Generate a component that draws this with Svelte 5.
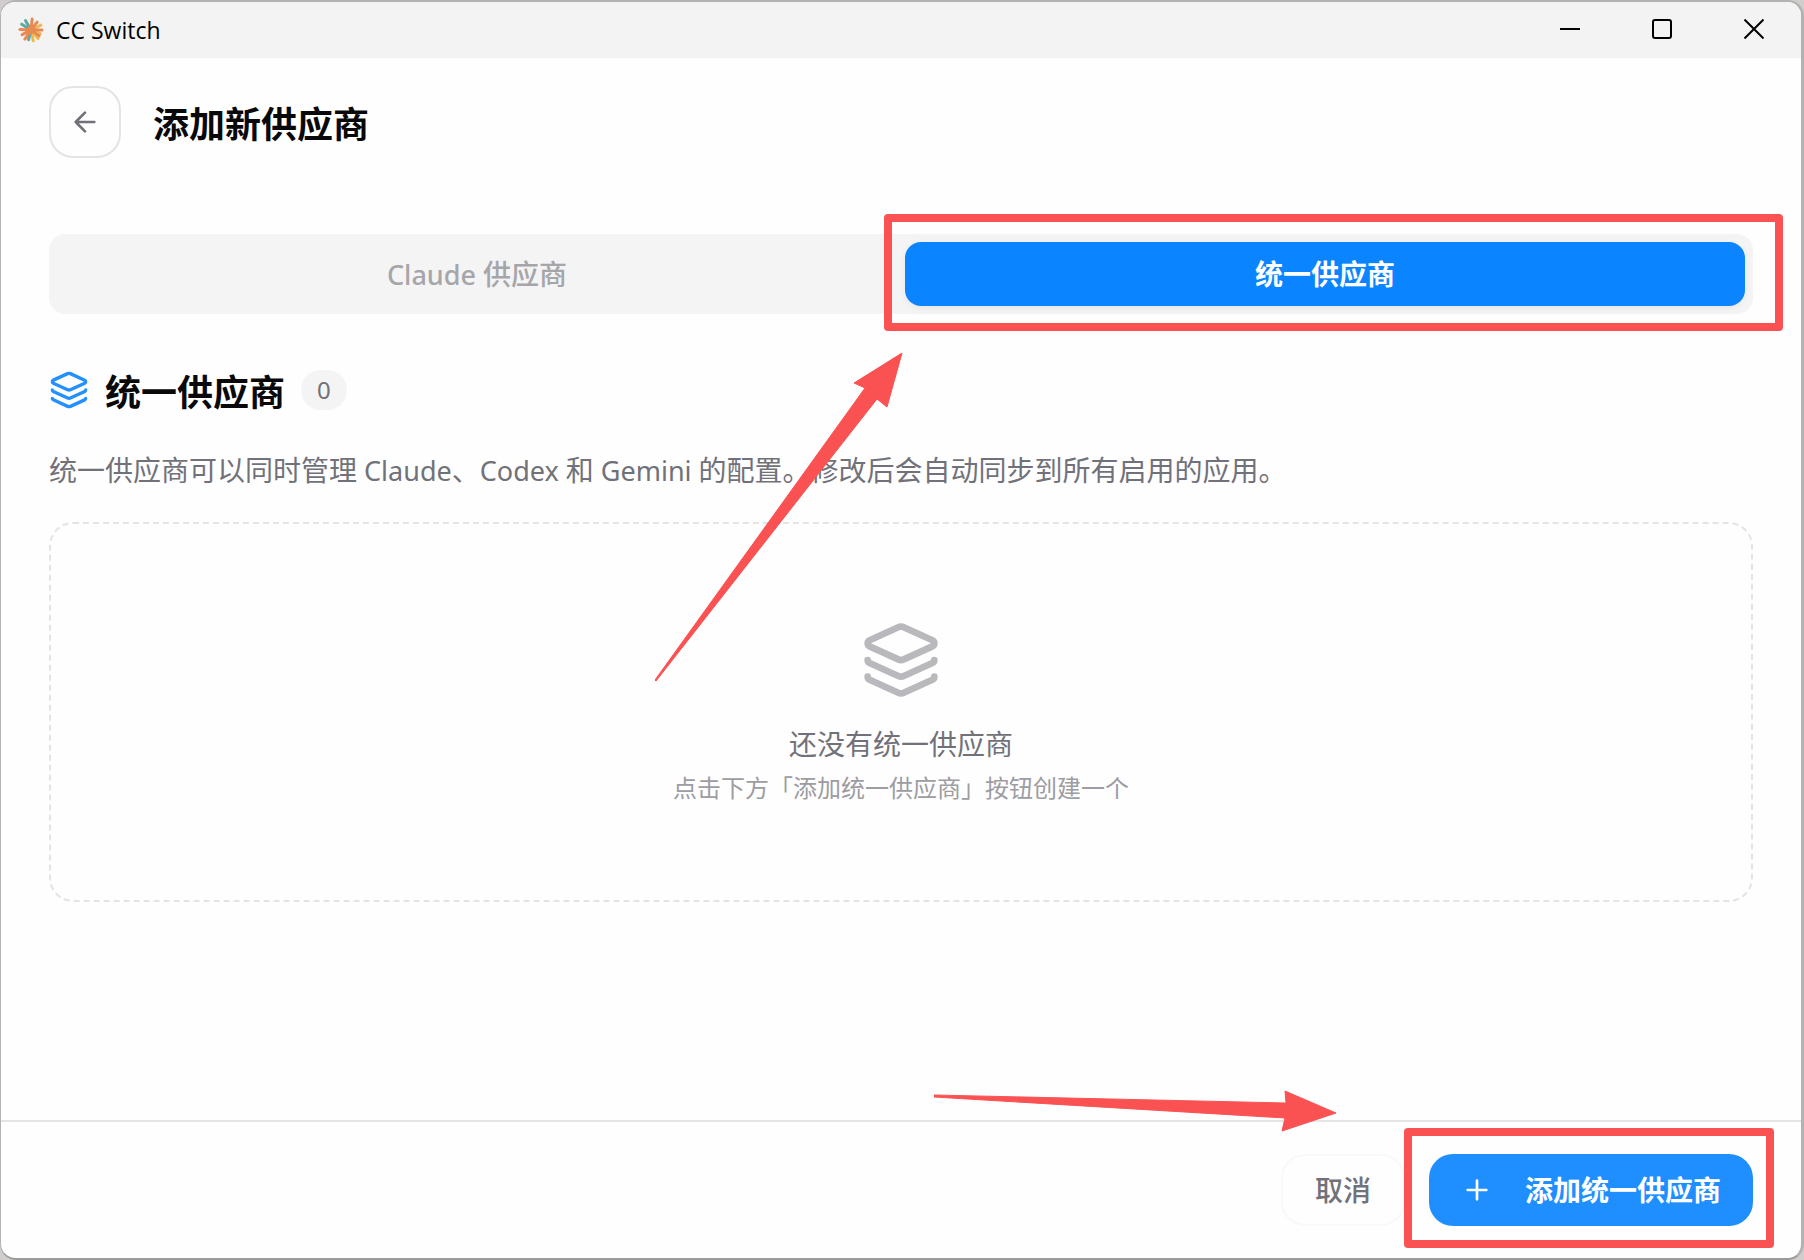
<script>
  const tabs = [
    { app: 'Claude ', label: '供应商' },
    { app: '', label: '统一供应商' }
  ];
  let active = $state(1);

  const rays = [
    { angle: 22, color: '#efb65a', length: 12 },
    { angle: 50, color: '#f0b84c', length: 13 },
    { angle: 78, color: '#f0b84c', length: 13 },
    { angle: 104, color: '#5fa9a3', length: 12 },
    { angle: 212, color: '#5fa9a3', length: 13 },
    { angle: 240, color: '#5fa9a3', length: 13 },
    { angle: 334, color: '#efb65a', length: 13 },
    { angle: 0, color: '#e98a52', length: 13 },
    { angle: 36, color: '#e98a52', length: 12 },
    { angle: 124, color: '#e98a52', length: 13 },
    { angle: 152, color: '#e98a52', length: 12 },
    { angle: 182, color: '#e98a52', length: 13 },
    { angle: 276, color: '#e98a52', length: 13 },
    { angle: 308, color: '#e98a52', length: 12 }
  ];
</script>

{#snippet layers()}
  <path d="m12.83 2.18a2 2 0 0 0-1.66 0L2.6 6.08a1 1 0 0 0 0 1.83l8.58 3.91a2 2 0 0 0 1.66 0l8.58-3.9a1 1 0 0 0 0-1.83Z" />
  <path d="M2 12a1 1 0 0 0 .58.91l8.6 3.91a2 2 0 0 0 1.65 0l8.58-3.9A1 1 0 0 0 22 12" />
  <path d="M2 17a1 1 0 0 0 .58.91l8.6 3.91a2 2 0 0 0 1.65 0l8.58-3.9A1 1 0 0 0 22 17" />
{/snippet}

<div class="window">
  <header class="titlebar">
    <svg class="logo" viewBox="-13 -13 26 26" aria-hidden="true">
      {#each rays as ray}
        <line x1="0" y1="0" x2={ray.length - 2} y2="0" stroke={ray.color} transform="rotate({ray.angle})" />
      {/each}
      <circle r="4" fill="#e98a52" />
    </svg>
    <span class="app-name">CC Switch</span>
    <div class="controls">
      <button aria-label="最小化"><svg viewBox="0 0 20 20"><path d="M0 10H20" /></svg></button>
      <button aria-label="最大化"><svg viewBox="0 0 20 20"><rect x="1" y="1" width="18" height="18" rx="2" /></svg></button>
      <button aria-label="关闭"><svg viewBox="0 0 20 20"><path d="M0.5 0.5 19.5 19.5M19.5 0.5 0.5 19.5" /></svg></button>
    </div>
  </header>

  <div class="page-head">
    <button class="back" aria-label="返回">
      <svg class="icon" viewBox="0 0 24 24"><path d="m12 19-7-7 7-7M19 12H5" /></svg>
    </button>
    <h1>添加新供应商</h1>
  </div>

  <main>
    <div class="tabs" role="tablist">
      {#each tabs as tab, i}
        <div class="tab-slot">
          <button role="tab" aria-selected={active === i} class:active={active === i} onclick={() => (active = i)}><span class="latin">{tab.app}</span>{tab.label}</button>
          {#if i === 1}<span class="mark mark-tab"></span>{/if}
        </div>
      {/each}
    </div>

    <div class="section-head">
      <svg class="layers" viewBox="0 0 24 24" aria-hidden="true">{@render layers()}</svg>
      <h2>统一供应商</h2>
      <span class="badge">0</span>
    </div>
    <p class="desc">统一供应商可以同时管理<span class="latin">{' Claude'}</span>、<span class="latin">{'Codex '}</span>和<span class="latin">{' Gemini '}</span>的配置。修改后会自动同步到所有启用的应用。</p>

    <section class="empty">
      <svg class="layers" viewBox="0 0 24 24" aria-hidden="true">{@render layers()}</svg>
      <p class="empty-title">还没有统一供应商</p>
      <p class="empty-hint">点击下方「添加统一供应商」按钮创建一个</p>
    </section>
  </main>

  <footer>
    <button class="cancel">取消</button>
    <div class="add-slot">
      <button class="add">
        <svg class="icon" viewBox="0 0 24 24" aria-hidden="true"><path d="M5 12h14M12 5v14" /></svg>
        添加统一供应商
      </button>
      <span class="mark mark-add"></span>
    </div>
  </footer>

  <svg class="arrow arrow-tab" viewBox="0 0 248 330" aria-hidden="true">
    <path d="M247 1 232 55 222 47 1 329 0 328 210 36 199 31Z" />
  </svg>
  <svg class="arrow arrow-add" viewBox="0 0 403 42" aria-hidden="true">
    <path d="M0 5 352 13 351 1 402 23 348 41 351 28 0 7Z" />
  </svg>
</div>

<style>
  :global(body) {
    margin: 0;
    background: #d2cdcd;
  }
  :global(*) {
    box-sizing: border-box;
  }
  .window {
    position: relative;
    display: flex;
    flex-direction: column;
    min-height: 100vh;
    border: 2px solid #b2b2b2;
    border-left-width: 1px;
    border-right-width: 3px;
    border-bottom-color: #9b9b9b;
    border-radius: 16px;
    background: #fefefe;
    color: #09090b;
    font: 28px/40px 'Noto Sans', 'Noto Sans CJK SC', sans-serif;
  }
  button {
    padding: 0;
    border: 0;
    background: none;
    color: inherit;
    font: inherit;
    cursor: pointer;
  }
  h1, h2, p {
    margin: 0;
  }
  svg {
    display: block;
    flex: none;
    fill: none;
    stroke: currentColor;
    stroke-width: 2;
  }
  .latin {
    font-size: 27px;
    line-height: 1;
    white-space: pre-wrap;
  }
  .titlebar {
    display: flex;
    align-items: center;
    height: 56px;
    padding-left: 17px;
    border-radius: 14px 14px 0 0;
    background: #f3f3f3;
    color: #000;
  }
  .logo {
    width: 26px;
    height: 26px;
    stroke-width: 3;
    stroke-linecap: round;
  }
  .logo circle {
    stroke: none;
  }
  .app-name {
    margin-left: 12px;
    font-family: 'Open Sans', sans-serif;
    font-size: 23px;
    line-height: 32px;
  }
  .controls {
    display: flex;
    align-self: flex-start;
    height: 54px;
    margin: 0 1px 0 auto;
  }
  .controls button {
    display: grid;
    place-items: center;
    width: 92px;
  }
  .controls svg {
    width: 20px;
    height: 20px;
  }
  .page-head {
    display: flex;
    align-items: center;
    gap: 32px;
    padding: 28px 48px 0;
  }
  .back {
    display: grid;
    place-items: center;
    width: 72px;
    height: 72px;
    border: 2px solid #e4e4e7;
    border-radius: 24px;
    color: #71717a;
  }
  .icon {
    width: 32px;
    height: 32px;
    stroke-linecap: round;
    stroke-linejoin: round;
  }
  h1, h2 {
    font-family: 'Noto Sans CJK SC', sans-serif;
    font-size: 36px;
    font-weight: 600;
    line-height: 56px;
  }
  main {
    flex: 1;
    padding: 76px 48px 48px;
  }
  .tabs {
    display: flex;
    gap: 8px;
    padding: 8px;
    border-radius: 16px;
    background: #f4f4f4;
  }
  .tab-slot {
    position: relative;
    display: flex;
    flex: 1;
  }
  .tabs button {
    flex: 1;
    height: 64px;
    border-radius: 16px;
    color: #a6a6aa;
    font-weight: 500;
  }
  .tabs button.active {
    background: #0a84ff;
    box-shadow: 0 2px 6px rgb(0 0 0 / 6%);
    color: #fff;
    font-weight: 600;
  }
  .section-head {
    display: flex;
    align-items: center;
    gap: 16px;
    margin-top: 48px;
  }
  .layers {
    width: 40px;
    height: 40px;
    color: #2490ff;
    stroke-linecap: round;
    stroke-linejoin: round;
  }
  .badge {
    padding: 4px 16px;
    border-radius: 20px;
    background: #f4f4f5;
    color: #71717a;
    font-size: 24px;
    line-height: 32px;
  }
  .desc {
    margin-top: 32px;
    color: #71717a;
  }
  .empty {
    display: flex;
    flex-direction: column;
    align-items: center;
    margin-top: 32px;
    padding: 96px 48px;
    border: 2px dashed #e4e4e7;
    border-radius: 24px;
    color: #71717a;
  }
  .empty .layers {
    width: 80px;
    height: 80px;
    margin-bottom: 24px;
    color: #b8b8bd;
  }
  .empty-hint {
    margin-top: 8px;
    color: #9c9ca2;
    font-size: 24px;
    line-height: 32px;
  }
  footer {
    display: flex;
    justify-content: flex-end;
    gap: 24px;
    padding: 32px 48px;
    border-top: 2px solid #e4e4e4;
    font-weight: 500;
  }
  footer button {
    height: 72px;
    padding: 0 32px;
    border-radius: 24px;
  }
  .cancel {
    border: 2px solid #f9f9f9;
    color: #71717a;
  }
  .add-slot {
    position: relative;
  }
  .add {
    display: flex;
    align-items: center;
    gap: 32px;
    background: #1f8fff;
    color: #fff;
    font-weight: 600;
  }
  .mark {
    position: absolute;
    border: 8px solid #fa5252;
    border-radius: 4px;
    pointer-events: none;
  }
  .mark-tab {
    inset: -28px -38px -25px -21px;
  }
  .mark-add {
    inset: -26px -21px -22px -25px;
  }
  .arrow {
    position: absolute;
    fill: #fa5252;
    stroke: #fa5252;
    stroke-width: 1;
    stroke-linejoin: round;
    pointer-events: none;
  }
  .arrow-tab {
    top: 350px;
    right: 898px;
    width: 248px;
    height: 330px;
  }
  .arrow-add {
    right: 464px;
    bottom: 126px;
    width: 403px;
    height: 42px;
  }
</style>
